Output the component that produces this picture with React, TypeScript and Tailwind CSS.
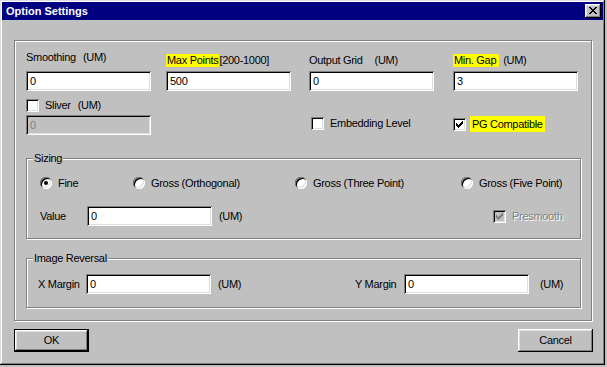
import type { ReactNode } from "react";

const sunken =
  "shadow-[inset_1px_1px_0_#808080,inset_-1px_-1px_0_#fff,inset_2px_2px_0_#000,inset_-2px_-2px_0_#dfdfdf]";
const raised =
  "shadow-[inset_-1px_-1px_0_#000,inset_1px_1px_0_#fff,inset_-2px_-2px_0_#808080,inset_2px_2px_0_#dfdfdf]";
const etched = "border border-[#808080] shadow-[inset_1px_1px_0_#fff,1px_1px_0_#fff]";

function TextBox({ value, disabled = false }: { value: string; disabled?: boolean }) {
  return (
    <div
      className={`flex h-[20px] w-[125px] shrink-0 items-center pl-[4px] ${sunken} ${
        disabled ? "bg-[#c0c0c0] text-[#808080]" : "bg-white text-black"
      }`}
    >
      {value}
    </div>
  );
}

function CheckMark({ color }: { color: string }) {
  // 7x7 pixel tick
  const rows: [number, number, number][] = [
    [6, 0, 1],
    [5, 1, 2],
    [0, 2, 1],
    [4, 2, 3],
    [0, 3, 2],
    [3, 3, 3],
    [0, 4, 5],
    [1, 5, 3],
    [2, 6, 1],
  ];
  return (
    <svg width="7" height="7" viewBox="0 0 7 7" shapeRendering="crispEdges">
      {rows.map(([x, y, w], i) => (
        <rect key={i} x={x} y={y} width={w} height={1} fill={color} />
      ))}
    </svg>
  );
}

function CheckBox({ checked = false, disabled = false }: { checked?: boolean; disabled?: boolean }) {
  return (
    <div
      className={`flex h-[13px] w-[13px] shrink-0 items-center justify-center ${sunken} ${
        disabled ? "bg-[#c0c0c0]" : "bg-white"
      }`}
    >
      {checked && <CheckMark color={disabled ? "#808080" : "#000"} />}
    </div>
  );
}

function Radio({ checked = false }: { checked?: boolean }) {
  return (
    <div
      className={`flex h-[12px] w-[12px] shrink-0 items-center justify-center rounded-full bg-white ${sunken}`}
    >
      {checked && <div className="h-[4px] w-[4px] rounded-full bg-black" />}
    </div>
  );
}

function Group({
  label,
  className,
  children,
}: {
  label?: string;
  className: string;
  children: ReactNode;
}) {
  return (
    <div className={`relative ${etched} ${className}`}>
      {label && (
        <span className="absolute top-[-7px] left-[6px] bg-[#c0c0c0] px-[1px] leading-[13px]">
          {label}
        </span>
      )}
      {children}
    </div>
  );
}

function Hi({ children, className = "" }: { children: ReactNode; className?: string }) {
  return <span className={`inline-block bg-[#ffff00] px-[1px] ${className}`}>{children}</span>;
}

function RadioItem({ label, checked, width }: { label: string; checked?: boolean; width: string }) {
  return (
    <div className={`flex items-center ${width}`}>
      <Radio checked={checked} />
      <span className="ml-[6px]">{label}</span>
    </div>
  );
}

function CloseGlyph() {
  const rows: [number, number, number][] = [
    [0, 0, 2], [6, 0, 2],
    [1, 1, 2], [5, 1, 2],
    [2, 2, 4],
    [3, 3, 2],
    [2, 4, 4],
    [1, 5, 2], [5, 5, 2],
    [0, 6, 2], [6, 6, 2],
  ];
  return (
    <svg width="8" height="7" viewBox="0 0 8 7" shapeRendering="crispEdges">
      {rows.map(([x, y, w], i) => (
        <rect key={i} x={x} y={y} width={w} height={1} fill="#000" />
      ))}
    </svg>
  );
}

export default function App() {
  return (
    <div className="h-[367px] w-[607px] bg-[#c0c0c0] font-['Liberation_Sans',Arial,sans-serif] text-[11px] leading-[13px] tracking-[-0.3px] text-black">
      <div
        className={`h-[365px] w-[605px] p-[2px] shadow-[inset_-1px_-1px_0_#000,inset_1px_1px_0_#dfdfdf,inset_-2px_-2px_0_#808080,inset_2px_2px_0_#fff]`}
      >
        {/* title bar */}
        <div className="flex h-[18px] items-center justify-between bg-[#000080] pr-[2px] pl-[4px]">
          <span className="font-bold tracking-normal text-white">Option Settings</span>
          <div className={`flex h-[14px] w-[16px] items-center justify-center bg-[#c0c0c0] pb-[1px] ${raised}`}>
            <CloseGlyph />
          </div>
        </div>

        <Group className="mt-[20px] ml-[12px] h-[281px] w-[578px] pt-[10px] pl-[11px]">
          {/* first row of fields */}
          <div className="flex">
            <div className="w-[140px]">
              <div className="h-[20px]">
                Smoothing<span className="ml-[7px]">(UM)</span>
              </div>
              <TextBox value="0" />
            </div>
            <div className="w-[143px]">
              <div className="h-[20px] pt-[3px]">
                <Hi>Max Points</Hi>
                <span>[200-1000]</span>
              </div>
              <TextBox value="500" />
            </div>
            <div className="w-[144px]">
              <div className="h-[20px] pt-[3px]">
                Output Grid<span className="ml-[12px]">(UM)</span>
              </div>
              <TextBox value="0" />
            </div>
            <div className="w-[125px]">
              <div className="h-[20px] pt-[3px]">
                <Hi className="pr-[3px]">Min. Gap</Hi>
                <span className="ml-[4px]">(UM)</span>
              </div>
              <TextBox value="3" />
            </div>
          </div>

          {/* second row */}
          <div className="mt-[8px] flex">
            <div className="w-[283px]">
              <div className="flex h-[13px] items-center">
                <CheckBox />
                <span className="ml-[6px]">Sliver</span>
                <span className="ml-[7px]">(UM)</span>
              </div>
              <div className="mt-[3px]">
                <TextBox value="0" disabled />
              </div>
            </div>
            <div className="flex w-[144px] items-center self-start pt-[18px] pl-[2px]">
              <CheckBox />
              <span className="ml-[6px]">Embedding Level</span>
            </div>
            <div className="flex items-center self-start pt-[17px]">
              <CheckBox checked />
              <Hi className="ml-[4px] h-[16px] px-[2px] pt-[1px] leading-[15px]">PG Compatible</Hi>
            </div>
          </div>

          {/* sizing */}
          <Group label="Sizing" className="mt-[23px] h-[81px] w-[555px] pt-[18px] pl-[13px]">
            <div className="flex h-[12px]">
              <RadioItem label="Fine" checked width="w-[93px]" />
              <RadioItem label="Gross (Orthogonal)" width="w-[162px]" />
              <RadioItem label="Gross (Three Point)" width="w-[166px]" />
              <RadioItem label="Gross (Five Point)" width="w-auto" />
            </div>
            <div className="mt-[17px] flex items-center">
              <span className="w-[47px] pl-[-1px]">Value</span>
              <TextBox value="0" />
              <span className="ml-[7px] w-[274px]">(UM)</span>
              <div className="flex items-center">
                <CheckBox checked disabled />
                <span className="ml-[6px] text-[#808080] [text-shadow:1px_1px_0_#fff]">Presmooth</span>
              </div>
            </div>
          </Group>

          {/* image reversal */}
          <Group label="Image Reversal" className="mt-[19px] h-[50px] w-[555px] pt-[15px] pl-[11px]">
            <div className="flex items-center">
              <span className="w-[48px]">X Margin</span>
              <TextBox value="0" />
              <span className="ml-[7px] w-[137px]">(UM)</span>
              <span className="w-[49px]">Y Margin</span>
              <TextBox value="0" />
              <span className="ml-[11px]">(UM)</span>
            </div>
          </Group>
        </Group>

        {/* buttons */}
        <div className="mt-[8px] flex justify-between pr-[10px] pl-[12px]">
          <div className="h-[23px] w-[75px] border border-black">
            <div className={`flex h-full w-full items-center justify-center bg-[#c0c0c0] ${raised}`}>
              OK
            </div>
          </div>
          <div className={`flex h-[23px] w-[75px] items-center justify-center bg-[#c0c0c0] ${raised}`}>
            Cancel
          </div>
        </div>
      </div>
    </div>
  );
}
